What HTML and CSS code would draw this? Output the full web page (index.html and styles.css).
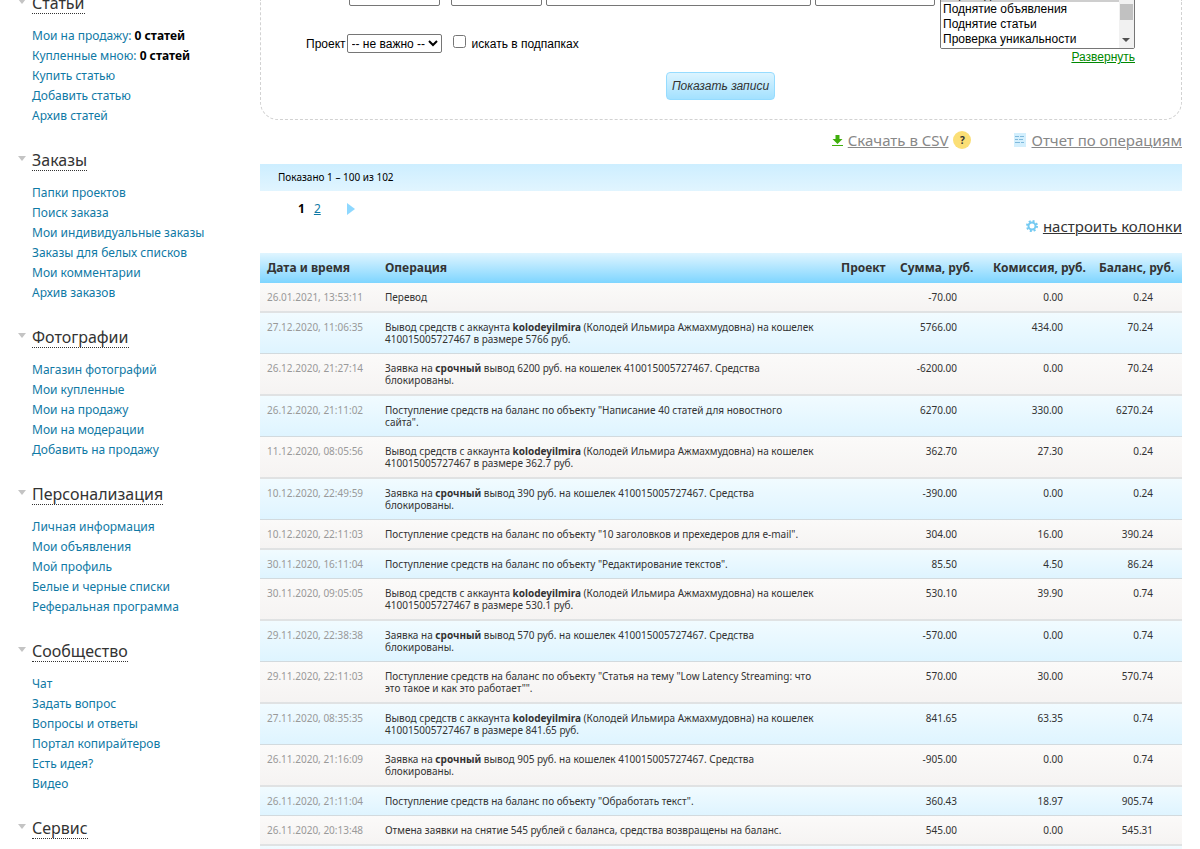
FILE: index.html
```html
<!DOCTYPE html>
<html lang="ru">
<head>
<meta charset="utf-8">
<title>Операции</title>
<link rel="stylesheet" href="styles.css">
</head>
<body>
<div class="page">
<nav class="sidebar">
<section class="group"><h2><a href="#">Статьи</a></h2><ul>
<li><a href="#">Мои на продажу:</a> <b>0 статей</b></li><li><a href="#">Купленные мною:</a> <b>0 статей</b></li><li><a href="#">Купить статью</a></li><li><a href="#">Добавить статью</a></li><li><a href="#">Архив статей</a></li></ul></section>
<section class="group"><h2><a href="#">Заказы</a></h2><ul>
<li><a href="#">Папки проектов</a></li><li><a href="#">Поиск заказа</a></li><li><a href="#">Мои индивидуальные заказы</a></li><li><a href="#">Заказы для белых списков</a></li><li><a href="#">Мои комментарии</a></li><li><a href="#">Архив заказов</a></li></ul></section>
<section class="group"><h2><a href="#">Фотографии</a></h2><ul>
<li><a href="#">Магазин фотографий</a></li><li><a href="#">Мои купленные</a></li><li><a href="#">Мои на продажу</a></li><li><a href="#">Мои на модерации</a></li><li><a href="#">Добавить на продажу</a></li></ul></section>
<section class="group"><h2><a href="#">Персонализация</a></h2><ul>
<li><a href="#">Личная информация</a></li><li><a href="#">Мои объявления</a></li><li><a href="#">Мой профиль</a></li><li><a href="#">Белые и черные списки</a></li><li><a href="#">Реферальная программа</a></li></ul></section>
<section class="group"><h2><a href="#">Сообщество</a></h2><ul>
<li><a href="#">Чат</a></li><li><a href="#">Задать вопрос</a></li><li><a href="#">Вопросы и ответы</a></li><li><a href="#">Портал копирайтеров</a></li><li><a href="#">Есть идея?</a></li><li><a href="#">Видео</a></li></ul></section>
<section class="group"><h2><a href="#">Сервис</a></h2></section>
</nav>
<main class="main">
<form class="filter">
<div class="filter-left">
<div class="row period"><label for="from">Период</label><input id="from" class="date" type="text"><input class="date second" type="text" aria-label="По"><input class="folder" type="text" placeholder="Код" aria-label="Код"><input class="sum" type="text" placeholder="Выбрать" aria-label="Выбрать"></div>
<div class="row project"><label for="project">Проект</label><select id="project" class="drop"><option>-- не важно --</option></select><input id="sub" type="checkbox"><label for="sub">искать в подпапках</label></div>
</div>
<div class="filter-right">
<div class="types-box">
<select class="types" size="4" multiple aria-label="Тип операции"><option class="current">Перевод</option><option>Поднятие объявления</option><option>Поднятие статьи</option><option>Проверка уникальности</option><option>Пополнение</option><option>Покупка статьи</option><option>Возврат</option></select>
<svg class="scroll" width="15" height="61" viewBox="0 0 15 61" aria-hidden="true"><path d="M0 0h15v61H0z" fill="#f1f1f1"/><path d="M1 17h13v16H1z" fill="#c1c1c1"/><path d="M4 8l3-3 3 3z" fill="#505050"/><path d="M3 51h8l-4 4z" fill="#505050"/></svg>
</div>
<a href="#">Развернуть</a>
</div>
<button type="button" class="submit">Показать записи</button>
</form>
<div class="tools">
<a href="#"><svg width="11" height="13" viewBox="0 0 11 13"><path d="M3.500 1h4v4h3L5.500 10 .5 5h3z" fill="#3fae0c"/><path d="M0 11.500h11" stroke="#3fae0c"/></svg><span>Скачать в CSV</span></a><button type="button" class="help">?</button>
<a href="#" class="report"><svg width="12" height="14" viewBox="0 0 12 14"><path d="M0 0h12v14H0z" fill="#d3effd"/><path d="M1 3.500h4M6 3.500h4M1 6.500h3M5 6.500h4M1 9.500h5M7 9.500h3" stroke="#7fb9dc"/></svg><span>Отчет по операциям</span></a>
</div>
<div class="shown">Показано 1 – 100 из 102</div>
<div class="pager"><b>1</b><a href="#">2</a><a href="#" aria-label="Следующая"><svg width="8" height="12" viewBox="0 0 8 12"><path d="M0 0l8 6-8 6z" fill="#8ed8ff"/></svg></a></div>
<div class="columns"><a href="#"><svg width="12" height="12" viewBox="0 0 12 12"><circle cx="6" cy="6" r="5" fill="none" stroke="#74caf2" stroke-width="2" stroke-dasharray="2 1.930"/><circle cx="6" cy="6" r="3.500" fill="none" stroke="#74caf2" stroke-width="2"/></svg><span>настроить колонки</span></a></div>
<table class="ops">
<thead><tr><th class="c-date">Дата и время</th><th>Операция</th><th class="c-project">Проект</th><th class="c-sum">Сумма, руб.</th><th class="c-fee">Комиссия, руб.</th><th class="c-bal">Баланс, руб.</th></tr></thead>
<tbody>
<tr><td>26.01.2021, 13:53:11</td><td>Перевод</td><td></td><td>-70.00</td><td>0.00</td><td>0.24</td></tr>
<tr><td>27.12.2020, 11:06:35</td><td>Вывод средств с аккаунта <b>kolodeyilmira</b> (Колодей Ильмира Ажмахмудовна) на кошелек<br>410015005727467 в размере 5766 руб.</td><td></td><td>5766.00</td><td>434.00</td><td>70.24</td></tr>
<tr><td>26.12.2020, 21:27:14</td><td>Заявка на <b>срочный</b> вывод 6200 руб. на кошелек 410015005727467. Средства<br>блокированы.</td><td></td><td>-6200.00</td><td>0.00</td><td>70.24</td></tr>
<tr><td>26.12.2020, 21:11:02</td><td>Поступление средств на баланс по объекту "Написание 40 статей для новостного<br>сайта".</td><td></td><td>6270.00</td><td>330.00</td><td>6270.24</td></tr>
<tr><td>11.12.2020, 08:05:56</td><td>Вывод средств с аккаунта <b>kolodeyilmira</b> (Колодей Ильмира Ажмахмудовна) на кошелек<br>410015005727467 в размере 362.7 руб.</td><td></td><td>362.70</td><td>27.30</td><td>0.24</td></tr>
<tr><td>10.12.2020, 22:49:59</td><td>Заявка на <b>срочный</b> вывод 390 руб. на кошелек 410015005727467. Средства<br>блокированы.</td><td></td><td>-390.00</td><td>0.00</td><td>0.24</td></tr>
<tr><td>10.12.2020, 22:11:03</td><td>Поступление средств на баланс по объекту "10 заголовков и прехедеров для e-mail".</td><td></td><td>304.00</td><td>16.00</td><td>390.24</td></tr>
<tr><td>30.11.2020, 16:11:04</td><td>Поступление средств на баланс по объекту "Редактирование текстов".</td><td></td><td>85.50</td><td>4.50</td><td>86.24</td></tr>
<tr><td>30.11.2020, 09:05:05</td><td>Вывод средств с аккаунта <b>kolodeyilmira</b> (Колодей Ильмира Ажмахмудовна) на кошелек<br>410015005727467 в размере 530.1 руб.</td><td></td><td>530.10</td><td>39.90</td><td>0.74</td></tr>
<tr><td>29.11.2020, 22:38:38</td><td>Заявка на <b>срочный</b> вывод 570 руб. на кошелек 410015005727467. Средства<br>блокированы.</td><td></td><td>-570.00</td><td>0.00</td><td>0.74</td></tr>
<tr><td>29.11.2020, 22:11:03</td><td>Поступление средств на баланс по объекту "Статья на тему "Low Latency Streaming: что<br>это такое и как это работает"".</td><td></td><td>570.00</td><td>30.00</td><td>570.74</td></tr>
<tr><td>27.11.2020, 08:35:35</td><td>Вывод средств с аккаунта <b>kolodeyilmira</b> (Колодей Ильмира Ажмахмудовна) на кошелек<br>410015005727467 в размере 841.65 руб.</td><td></td><td>841.65</td><td>63.35</td><td>0.74</td></tr>
<tr><td>26.11.2020, 21:16:09</td><td>Заявка на <b>срочный</b> вывод 905 руб. на кошелек 410015005727467. Средства<br>блокированы.</td><td></td><td>-905.00</td><td>0.00</td><td>0.74</td></tr>
<tr><td>26.11.2020, 21:11:04</td><td>Поступление средств на баланс по объекту "Обработать текст".</td><td></td><td>360.43</td><td>18.97</td><td>905.74</td></tr>
<tr><td>26.11.2020, 20:13:48</td><td>Отмена заявки на снятие 545 рублей с баланса, средства возвращены на баланс.</td><td></td><td>545.00</td><td>0.00</td><td>545.31</td></tr>
<tr><td></td><td></td><td></td><td></td><td></td><td></td></tr>
</tbody>
</table>
</main>
</div>
</body>
</html>
```
FILE: styles.css
```css
* { box-sizing: border-box; }
body { margin: 0; background: #fff; color: #000; font: 12px "Noto Sans", sans-serif; }
.page { display: flex; height: 100vh; overflow: hidden; }
.sidebar { flex: 0 0 260px; padding-left: 18px; margin-top: -9px; }
.group { margin-bottom: 22px; }
.group h2 { display: flex; align-items: center; gap: 6px; margin: 0; height: 24px; font-size: 16px; font-weight: 400; line-height: 20px; }
.group h2::before { content: ""; border: 4px solid transparent; border-top: 5px solid #c4c4c4; border-bottom: 0; margin-bottom: 4px; }
.group h2 a { color: #333; text-decoration: none; border-bottom: 1px dotted #333; }
.group ul { list-style: none; margin: 0; padding: 11px 0 0 14px; }
.group li { line-height: 20px; white-space: nowrap; }
.group li a { color: #0f79a5; text-decoration: none; }
.main { flex: 1; min-width: 0; margin-right: 18px; }
.filter { display: grid; grid-template-columns: 1fr auto; height: 120px; padding: 0 46px 0 45px; border: 1px dashed #d2d2d2; border-top: 0; border-radius: 0 0 18px 18px; font-family: "Liberation Sans", sans-serif; }
.row { display: flex; align-items: center; }
.period { height: 28px; margin-top: -22px; }
.period label { width: 43px; }
.period input { height: 28px; padding: 0 5px; border: 1px solid #767676; border-radius: 2px; font: 12px "Liberation Sans", sans-serif; }
.date { width: 91px; }
.second { margin: 0 4px 0 11px; }
.folder { width: 265px; margin-right: 4px; }
.sum { width: 120px; }
.project { margin-top: 28px; }
.drop { height: 19px; width: 95px; margin-left: 1px; padding: 0; border: 1px solid #767676; border-radius: 2px; background: #fff; font: 12px "Liberation Sans", sans-serif; }
.project input { width: 13px; height: 13px; margin: 0 6px 4px 11px; }
.filter-right { display: flex; flex-direction: column; align-items: flex-end; margin-top: -14px; }
.types-box { position: relative; }
.types { display: block; width: 195px; height: 63px; padding: 0; border: 1px solid #767676; border-radius: 2px; font: 12px "Liberation Sans", sans-serif; }
.types option { min-height: 15px; padding: 0 2px; line-height: 15px; }
.types .current { background: #cecece; }
.scroll { position: absolute; top: 1px; right: 1px; pointer-events: none; }
.filter-right a { color: #080; line-height: 16px; }
.submit { grid-column: 1 / 3; justify-self: center; align-self: end; height: 28px; margin-bottom: 19px; padding: 0 5px; border: 1px solid #96dcff; border-radius: 4px; background: linear-gradient(#dcf4ff, #a3e1ff); font: italic 12px "Liberation Sans", sans-serif; color: #333; }
.tools { display: flex; justify-content: flex-end; align-items: center; height: 40px; margin-bottom: 4px; font-size: 15px; }
.tools a, .columns a { display: flex; align-items: center; gap: 5px; color: #888; text-decoration: none; }
.tools span, .columns span { text-decoration: underline; text-decoration-thickness: 1px; }
.help { width: 18px; height: 18px; margin: 0 43px 0 5px; padding: 0; border: 0; border-radius: 50%; background: #fbdf76; color: #333; font: bold 10px "Noto Sans", sans-serif; }
.shown { height: 27px; padding-left: 18px; background: linear-gradient(#cdeeff, #e1f5ff); font-size: 10px; line-height: 27px; }
.pager { display: flex; align-items: center; gap: 9px; padding: 10px 0 0 38px; line-height: 16px; }
.pager a { color: #0f79a5; }
.pager a:last-child { margin-left: 17px; }
.pager svg { display: block; }
.columns { display: flex; justify-content: flex-end; height: 36px; font-size: 15px; line-height: 18px; }
.columns a { color: #333; align-self: start; }
.ops { width: 100%; table-layout: fixed; border-collapse: separate; border-spacing: 0; font-size: 10px; line-height: 12px; color: #333; }
.ops th { height: 30px; padding: 0 0 0 7px; background: linear-gradient(#e0f5ff, #7ed5ff); font-size: 12px; text-align: left; white-space: nowrap; }
.ops td { padding: 8px 7px; border-bottom: 1px solid #d2dade; vertical-align: top; white-space: nowrap; }
.ops tr { background: linear-gradient(#f1fbff, #def4ff); }
.ops tbody tr:nth-child(odd) { background: linear-gradient(#fbfaf9, #f5f3f2); }
.ops tbody tr:nth-child(odd) td { border-bottom: 2px solid #e0e2e3; }
.ops td:first-child { color: #999; }
.ops td:nth-child(n+4) { padding-right: 29px; text-align: right; }
.c-date { width: 118px; }
.c-project { width: 59px; }
.c-sum { width: 93px; }
.c-fee { width: 106px; }
.c-bal { width: 90px; }
```
